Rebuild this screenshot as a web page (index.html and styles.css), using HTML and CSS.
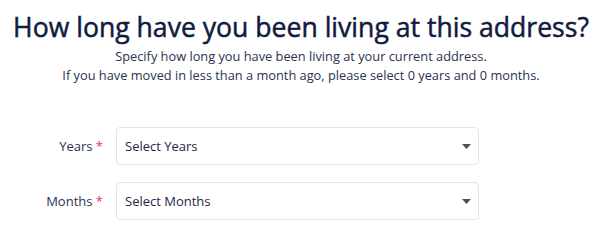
FILE: index.html
```html
<!DOCTYPE html>
<html lang="en">
<head>
    <meta charset="UTF-8">
    <meta name="viewport" content="width=device-width, initial-scale=1.0">
    <title>Residence Duration</title>
    <link rel="stylesheet" href="styles.css">
</head>
<body>
    <div class="step">
        <h1>How long have you been living at this address?</h1>
        <p class="hint">
            Specify how long you have been living at your current address.<br>
            If you have moved in less than a month ago, please select 0 years and 0 months.
        </p>

        <form class="duration-form">
            <div class="form-row">
                <label for="years">Years <span class="req">*</span></label>
                <div class="select-wrap">
                    <select id="years" name="years">
                        <option value="">Select Years</option>
                    </select>
                    <svg class="caret" width="9" height="5" viewBox="0 0 9 5"><path d="M0 0h9L4.5 5z" fill="#4a4f5c"/></svg>
                </div>
            </div>
            <div class="form-row">
                <label for="months">Months <span class="req">*</span></label>
                <div class="select-wrap">
                    <select id="months" name="months">
                        <option value="">Select Months</option>
                    </select>
                    <svg class="caret" width="9" height="5" viewBox="0 0 9 5"><path d="M0 0h9L4.5 5z" fill="#4a4f5c"/></svg>
                </div>
            </div>
        </form>
    </div>
</body>
</html>
```

FILE: styles.css
```css
body {
    margin: 0;
    font-family: "Open Sans", "Noto Sans", sans-serif;
    color: #1d2748;
    background: #fff;
}
.step {
    padding-top: 9px;
}
h1 {
    margin: 0;
    text-align: center;
    font-size: 26.6px;
    font-weight: 500;
    line-height: 36px;
    color: #111b3f;
    -webkit-text-stroke: 0.5px #111b3f;
}
.hint {
    margin: 2px 0 0;
    text-align: center;
    font-size: 12.8px;
    line-height: 19px;
    color: #2a3350;
}
.duration-form {
    margin-top: 42px;
    display: flex;
    flex-direction: column;
    gap: 17px;
}
.form-row {
    display: flex;
    align-items: center;
}
.form-row label {
    width: 116px;
    padding-right: 13px;
    box-sizing: border-box;
    text-align: right;
    font-size: 13px;
    color: #2a3350;
}
.req {
    color: #e8364f;
}
.select-wrap {
    position: relative;
    width: 363px;
}
select {
    width: 100%;
    height: 38px;
    padding: 0 30px 0 8px;
    border: 1px solid #e3e5ee;
    border-radius: 4px;
    background: #fff;
    font-family: inherit;
    font-size: 13px;
    color: #1d2748;
    appearance: none;
    -webkit-appearance: none;
}
.caret {
    position: absolute;
    right: 8px;
    top: 17px;
    pointer-events: none;
}
```
